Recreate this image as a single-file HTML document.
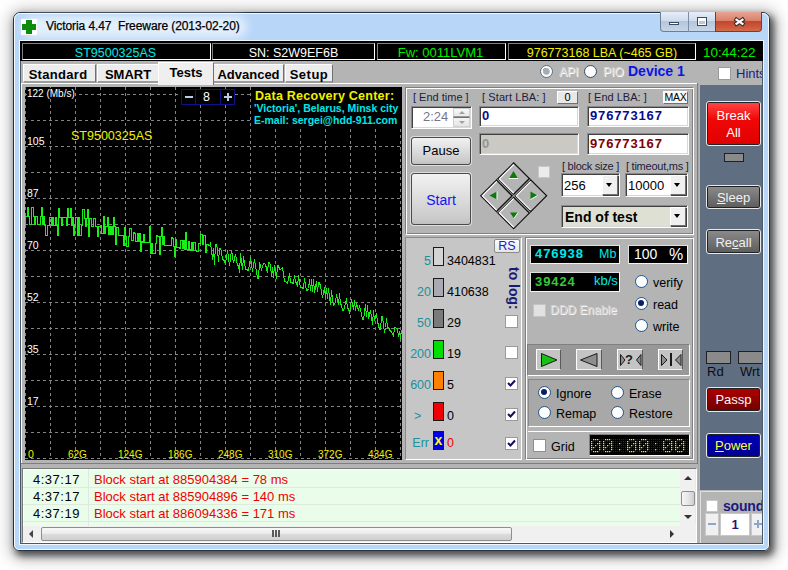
<!DOCTYPE html><html><head><meta charset="utf-8"><style>
*{margin:0;padding:0;box-sizing:border-box}
html,body{width:788px;height:570px;overflow:hidden;background:#fff;font-family:"Liberation Sans",sans-serif;color:#000}
.a{position:absolute;white-space:pre}
.et{position:absolute;border-top:1px solid #808080;border-left:1px solid #808080;border-right:1px solid #fff;border-bottom:1px solid #fff;box-shadow:inset 1px 1px 0 #fff, inset -1px -1px 0 #808080}
.sunk{position:absolute;border-top:1px solid #7b7b7b;border-left:1px solid #7b7b7b;border-right:1px solid #fff;border-bottom:1px solid #fff}
.sunk2{position:absolute;border-top:1px solid #8a8a8a;border-left:1px solid #8a8a8a;border-right:1px solid #fff;border-bottom:1px solid #fff;box-shadow:inset 1px 1px 0 #404040, inset -1px -1px 0 #d8d8d8}
.btn{position:absolute;border:1px solid #555;border-radius:3px;background:linear-gradient(#f2f2f2,#dedede 45%,#cacaca 90%,#c0c0c0);box-shadow:0 0 0 1px rgba(255,255,255,.55);text-align:center}
.seg{position:absolute;top:43px;height:17px;border-top:1px solid #808080;border-left:1px solid #808080;border-right:1px solid #fff;border-bottom:1px solid #fff;font-size:12.5px;text-align:center;line-height:15px;padding-top:2px;white-space:pre}
.tab{position:absolute;top:64px;height:19px;background:#ededed;border-top:1px solid #fcfcfc;border-left:1px solid #fff;border-right:1px solid #707070;border-bottom:2px solid #9c9c9c;padding-top:1px;font-size:13px;font-weight:bold;text-align:center;line-height:17px;white-space:pre}
.rad{position:absolute;width:13px;height:13px;border-radius:50%;border:1.5px solid #265888;background:radial-gradient(circle at 45% 40%,#fff,#fdfdfd 60%,#e8e8e8)}
.rad.on::after{content:"";position:absolute;left:2px;top:2px;width:6px;height:6px;border-radius:50%;background:#0c1c6a}
.chk{position:absolute;width:13px;height:13px;background:#fff;border:1px solid #8e8f8f}
.lbl{position:absolute;font-size:11px;color:#1c1c3c;white-space:pre}
</style></head><body>
<div class="a" style="left:13px;top:12px;width:757px;height:539px;border-radius:7px 7px 6px 6px;box-shadow:3px 4px 7px 1px rgba(0,0,0,.6), 2px 3px 16px 5px rgba(0,0,0,.28)"></div>
<div class="a" style="left:13px;top:12px;width:757px;height:539px;border:1px solid #26323e;border-radius:7px 7px 6px 6px;background:#b7d6f8"></div>
<div class="a" style="left:14px;top:13px;width:755px;height:537px;border:1px solid rgba(255,255,255,.85);border-radius:6px 6px 5px 5px"></div>
<div class="a" style="left:19px;top:40px;width:745px;height:505px;border:1px solid rgba(255,255,255,.8)"></div>
<div class="a" style="left:20px;top:41px;width:743px;height:503px;border:1px solid #4a5868;background:#b4b4b4"></div>
<div class="a" style="left:22px;top:16px;width:225px;height:22px;border-radius:11px;background:rgba(255,255,255,.62);filter:blur(5px)"></div>
<div class="a" style="left:21px;top:19px;width:16px;height:16px;background:#fff"></div>
<div class="a" style="left:26px;top:20px;width:6px;height:14px;background:#0b8d0b"></div>
<div class="a" style="left:22px;top:24px;width:14px;height:6px;background:#0b8d0b"></div>
<div class="a" style="left:46px;top:19px;font-size:12px;letter-spacing:-0.08px;color:#000;-webkit-text-stroke:0.25px #000">Victoria 4.47  Freeware (2013-02-20)</div>
<div class="a" style="left:660px;top:12px;width:56px;height:20px;border:1px solid #6d7f93;border-top:none;border-radius:0 0 0 4px;background:linear-gradient(#e6eef8,#cfdced 45%,#b3c6dc 50%,#c6d6e8)"></div>
<div class="a" style="left:688px;top:12px;width:1px;height:20px;background:#7d8ea2"></div>
<div class="a" style="left:715px;top:12px;width:47px;height:20px;border:1px solid #7a3a30;border-top:none;border-radius:0 0 4px 0;background:linear-gradient(#e8a493,#d9816b 45%,#c4442c 50%,#d26a4a)"></div>
<div class="a" style="left:669px;top:22px;width:10px;height:3px;background:#fff;border:1px solid #3a4a60"></div>
<div class="a" style="left:697px;top:17px;width:10px;height:9px;background:transparent;border:1px solid #3a4a60;box-shadow:inset 0 0 0 1px #fff, inset 0 2px 0 1px #fff"></div>
<svg class="a" style="left:732px;top:15px" width="15" height="13" viewBox="0 0 15 13"><path d="M4.5 4.7 L10.5 8.8 M10.5 4.7 L4.5 8.8" stroke="#3a2a2a" stroke-width="4.2" stroke-linecap="square"/><path d="M4.5 4.7 L10.5 8.8 M10.5 4.7 L4.5 8.8" stroke="#fff" stroke-width="2.2" stroke-linecap="square"/></svg>
<div class="a" style="left:20px;top:41px;width:743px;height:20px;background:#000"></div>
<div class="seg" style="left:22px;width:189px;color:#00e8e8;padding-right:2px">ST9500325AS</div>
<div class="seg" style="left:212px;width:163px;color:#fff">SN: S2W9EF6B</div>
<div class="seg" style="left:377px;width:129px;color:#00ee00;font-size:13px;padding-right:2px;padding-top:1px">Fw: 0011LVM1</div>
<div class="seg" style="left:508px;width:188px;color:#f0f000">976773168 LBA (~465 GB)</div>
<div class="a" style="left:703px;top:45px;font-size:13.5px;color:#00ee00">10:44:22</div>
<div class="tab" style="left:23px;width:73px;letter-spacing:0.3px;padding-right:3px">Standard</div>
<div class="tab" style="left:97px;width:62px">SMART</div>
<div class="tab" style="left:213px;width:71px">Advanced</div>
<div class="tab" style="left:285px;width:48px;letter-spacing:0.5px">Setup</div>
<div class="a" style="left:22px;top:83px;width:675px;height:1px;background:#fff"></div>
<div class="a" style="left:21px;top:83px;width:1px;height:380px;background:#fff"></div>
<div class="a" style="left:21px;top:463px;width:676px;height:1px;background:#7e7e7e"></div>
<div class="a" style="left:158px;top:62px;width:56px;height:23px;background:#efefef;border-top:1px solid #fff;border-left:1px solid #fff;border-right:1px solid #707070;font-size:13px;font-weight:bold;text-align:center;line-height:18px;padding-top:1px">Tests</div>
<div class="rad on" style="left:540px;top:65px;border-color:#5a7390"></div>
<div class="a" style="left:543px;top:68px;width:7px;height:7px;border-radius:50%;background:radial-gradient(#a8acb0 55%,#e0e0e0 75%)"></div>
<div class="a" style="left:559px;top:65px;font-size:12px;color:#d4d4d4;text-shadow:1px 1px 0 #fff">API</div>
<div class="rad" style="left:584px;top:65px;border-color:#34506e"></div>
<div class="a" style="left:603px;top:65px;font-size:12px;color:#d4d4d4;text-shadow:1px 1px 0 #fff">PIO</div>
<div class="a" style="left:628px;top:63px;font-size:14px;font-weight:bold;color:#0a14e6">Device 1</div>
<div class="chk" style="left:718px;top:67px;width:13px;height:13px;border-color:#9a9a9a"></div>
<div class="a" style="left:736px;top:66px;width:26px;overflow:hidden;font-size:13px;color:#1a1a8a">Hints</div>
<svg class="a" style="left:25px;top:87px" width="377" height="373" viewBox="25 87 377 373" shape-rendering="crispEdges">
<rect x="25" y="87" width="377" height="373" fill="#000"/>
<path d="M25 94.5H401 M25 120.5H401 M25 146.5H401 M25 172.5H401 M25 198.5H401 M25 224.5H401 M25 250.5H401 M25 276.5H401 M25 302.5H401 M25 328.5H401 M25 354.5H401 M25 380.5H401 M25 406.5H401 M25 432.5H401 M25 458.5H401 M25.5 87V459 M50.5 87V459 M75.5 87V459 M100.5 87V459 M125.5 87V459 M150.5 87V459 M175.5 87V459 M200.5 87V459 M225.5 87V459 M250.5 87V459 M275.5 87V459 M300.5 87V459 M325.5 87V459 M350.5 87V459 M375.5 87V459 M400.5 87V459" stroke="#848484" stroke-width="1" stroke-dasharray="3 3" fill="none"/>
<polyline points="25.5,224.5 25.5,224.5 25.5,216.5 26.5,216.5 26.5,216.5 26.5,216.5 27.5,216.5 27.5,216.5 27.5,207.5 28.5,207.5 28.5,207.5 28.5,216.5 29.5,216.5 29.5,216.5 29.5,224.5 31.5,224.5 31.5,224.5 31.5,207.5 33.5,207.5 33.5,207.5 33.5,216.5 34.5,216.5 34.5,216.5 34.5,224.5 35.5,224.5 35.5,224.5 35.5,216.5 37.5,216.5 37.5,216.5 37.5,224.5 38.5,224.5 38.5,224.5 38.5,224.5 39.5,224.5 39.5,224.5 39.5,224.5 40.5,224.5 40.5,224.5 40.5,216.5 41.5,216.5 41.5,216.5 41.5,207.5 42.5,207.5 42.5,207.5 42.5,224.5 43.5,224.5 43.5,224.5 43.5,216.5 44.5,216.5 44.5,216.5 44.5,225.5 45.5,225.5 45.5,225.5 45.5,235.5 47.5,235.5 47.5,235.5 47.5,225.5 48.5,225.5 48.5,225.5 48.5,225.5 49.5,225.5 49.5,225.5 49.5,217.5 50.5,217.5 50.5,217.5 50.5,217.5 51.5,217.5 51.5,217.5 51.5,225.5 52.5,225.5 52.5,225.5 52.5,217.5 53.5,217.5 53.5,217.5 53.5,225.5 55.5,225.5 55.5,225.5 55.5,217.5 56.5,217.5 56.5,217.5 56.5,225.5 57.5,225.5 57.5,225.5 57.5,235.5 58.5,235.5 58.5,235.5 58.5,208.5 59.5,208.5 59.5,208.5 59.5,217.5 61.5,217.5 61.5,217.5 61.5,225.5 62.5,225.5 62.5,225.5 62.5,217.5 63.5,217.5 63.5,217.5 63.5,217.5 64.5,217.5 64.5,217.5 64.5,217.5 66.5,217.5 66.5,217.5 66.5,225.5 67.5,225.5 67.5,225.5 67.5,208.5 68.5,208.5 68.5,208.5 68.5,217.5 69.5,217.5 69.5,217.5 69.5,217.5 70.5,217.5 70.5,217.5 70.5,208.5 71.5,208.5 71.5,208.5 71.5,225.5 72.5,225.5 72.5,225.5 72.5,217.5 73.5,217.5 73.5,217.5 73.5,235.5 74.5,235.5 74.5,235.5 74.5,225.5 75.5,225.5 75.5,225.5 75.5,217.5 76.5,217.5 76.5,217.5 76.5,217.5 77.5,217.5 77.5,217.5 77.5,235.5 78.5,235.5 78.5,235.5 78.5,217.5 79.5,217.5 79.5,217.5 79.5,235.5 81.5,235.5 81.5,235.5 81.5,225.5 82.5,225.5 82.5,225.5 82.5,209.5 84.5,209.5 84.5,209.5 84.5,218.5 85.5,218.5 85.5,218.5 85.5,226.5 86.5,226.5 86.5,226.5 86.5,218.5 87.5,218.5 87.5,218.5 87.5,209.5 88.5,209.5 88.5,209.5 88.5,236.5 89.5,236.5 89.5,236.5 89.5,218.5 91.5,218.5 91.5,218.5 91.5,226.5 93.5,226.5 93.5,226.5 93.5,218.5 95.5,218.5 95.5,218.5 95.5,226.5 97.5,226.5 97.5,226.5 97.5,236.5 98.5,236.5 98.5,236.5 98.5,226.5 100.5,226.5 100.5,226.5 100.5,225.5 101.5,225.5 101.5,225.5 101.5,233.5 103.5,233.5 103.5,233.5 103.5,216.5 104.5,216.5 104.5,216.5 104.5,233.5 105.5,233.5 105.5,233.5 105.5,226.5 107.5,226.5 107.5,226.5 107.5,217.5 108.5,217.5 108.5,217.5 108.5,234.5 109.5,234.5 109.5,234.5 109.5,226.5 110.5,226.5 110.5,226.5 110.5,234.5 111.5,234.5 111.5,234.5 111.5,226.5 112.5,226.5 112.5,226.5 112.5,234.5 113.5,234.5 113.5,234.5 113.5,217.5 114.5,217.5 114.5,217.5 114.5,226.5 115.5,226.5 115.5,226.5 115.5,244.5 116.5,244.5 116.5,244.5 116.5,227.5 117.5,227.5 117.5,227.5 117.5,227.5 118.5,227.5 118.5,227.5 118.5,235.5 119.5,235.5 119.5,235.5 119.5,235.5 121.5,235.5 121.5,235.5 121.5,235.5 123.5,235.5 123.5,235.5 123.5,245.5 124.5,245.5 124.5,245.5 124.5,227.5 125.5,227.5 125.5,227.5 125.5,236.5 126.5,236.5 126.5,236.5 126.5,246.5 128.5,246.5 128.5,246.5 128.5,236.5 129.5,236.5 129.5,236.5 129.5,228.5 131.5,228.5 131.5,228.5 131.5,240.5 133.5,240.5 133.5,240.5 133.5,232.5 134.5,232.5 134.5,232.5 134.5,233.5 135.5,233.5 135.5,233.5 135.5,241.5 137.5,241.5 137.5,241.5 137.5,233.5 138.5,233.5 138.5,233.5 138.5,241.5 139.5,241.5 139.5,241.5 139.5,233.5 140.5,233.5 140.5,233.5 140.5,251.5 141.5,251.5 141.5,251.5 141.5,241.5 142.5,241.5 142.5,241.5 142.5,242.5 143.5,242.5 143.5,242.5 143.5,234.5 144.5,234.5 144.5,234.5 144.5,242.5 145.5,242.5 145.5,242.5 145.5,242.5 146.5,242.5 146.5,242.5 146.5,242.5 147.5,242.5 147.5,242.5 147.5,242.5 149.5,242.5 149.5,242.5 149.5,226.5 150.5,226.5 150.5,226.5 150.5,253.5 151.5,253.5 151.5,253.5 151.5,243.5 152.5,243.5 152.5,243.5 152.5,253.5 153.5,253.5 153.5,253.5 153.5,253.5 155.5,253.5 155.5,253.5 155.5,243.5 156.5,243.5 156.5,243.5 156.5,235.5 157.5,235.5 157.5,235.5 157.5,236.5 159.5,236.5 159.5,236.5 159.5,254.5 160.5,254.5 160.5,254.5 160.5,236.5 161.5,236.5 161.5,236.5 161.5,227.5 162.5,227.5 162.5,227.5 162.5,244.5 163.5,244.5 163.5,244.5 163.5,236.5 164.5,236.5 164.5,236.5 164.5,245.5 166.5,245.5 166.5,245.5 166.5,245.5 168.5,245.5 168.5,245.5 168.5,245.5 170.5,245.5 170.5,245.5 170.5,245.5 171.5,245.5 171.5,245.5 171.5,237.5 172.5,237.5 172.5,237.5 172.5,238.5 173.5,238.5 173.5,238.5 173.5,246.5 174.5,246.5 174.5,246.5 174.5,256.5 175.5,256.5 175.5,256.5 175.5,239.5 176.5,239.5 176.5,239.5 176.5,247.5 177.5,247.5 177.5,247.5 177.5,247.5 179.5,247.5 179.5,247.5 179.5,248.5 180.5,248.5 180.5,248.5 180.5,240.5 182.5,240.5 182.5,240.5 182.5,248.5 183.5,248.5 183.5,248.5 183.5,240.5 184.5,240.5 184.5,240.5 184.5,249.5 185.5,249.5 185.5,249.5 185.5,232.5 186.5,232.5 186.5,232.5 186.5,249.5 188.5,249.5 188.5,249.5 188.5,241.5 189.5,241.5 189.5,241.5 189.5,249.5 190.5,249.5 190.5,249.5 190.5,250.5 191.5,250.5 191.5,250.5 191.5,242.5 192.5,242.5 192.5,242.5 192.5,250.5 193.5,250.5 193.5,250.5 193.5,242.5 195.5,242.5 195.5,242.5 195.5,250.5 196.5,250.5 196.5,250.5 196.5,251.5 198.5,251.5 198.5,251.5 198.5,243.5 200.5,243.5 200.5,243.5 200.5,234.5 202.5,234.5 202.5,234.5 202.5,244.5 203.5,244.5 203.5,244.5 203.5,235.5 205.5,235.5 205.5,235.5 205.5,252.5 206.5,252.5 206.5,252.5 206.5,244.5 208.5,244.5 208.5,244.5 208.5,245.5 210.5,245.5 210.5,245.5 210.5,242.5 212.5,259.5 213.5,248.5 214.5,264.5 215.5,244.5 216.5,244.5 217.5,249.5 218.5,261.5 219.5,248.5 220.5,248.5 221.5,251.5 222.5,259.5 223.5,259.5 225.5,263.5 227.5,250.5 229.5,265.5 231.5,250.5 233.5,262.5 235.5,254.5 237.5,265.5 238.5,265.5 239.5,272.5 240.5,253.5 242.5,269.5 243.5,256.5 245.5,269.5 246.5,269.5 248.5,270.5 250.5,257.5 252.5,271.5 254.5,259.5 256.5,271.5 257.5,278.5 258.5,278.5 259.5,262.5 261.5,269.5 263.5,263.5 264.5,263.5 265.5,264.5 267.5,272.5 268.5,262.5 269.5,262.5 270.5,265.5 271.5,276.5 272.5,267.5 273.5,277.5 274.5,265.5 276.5,278.5 277.5,265.5 278.5,265.5 279.5,269.5 280.5,269.5 282.5,267.5 284.5,281.5 285.5,281.5 287.5,283.5 289.5,273.5 290.5,282.5 291.5,282.5 293.5,283.5 294.5,275.5 295.5,282.5 296.5,282.5 297.5,286.5 298.5,275.5 300.5,287.5 301.5,287.5 303.5,288.5 304.5,278.5 306.5,290.5 307.5,290.5 308.5,288.5 309.5,279.5 310.5,290.5 311.5,279.5 312.5,291.5 313.5,279.5 314.5,292.5 316.5,281.5 317.5,291.5 318.5,282.5 319.5,282.5 320.5,286.5 322.5,297.5 324.5,287.5 325.5,297.5 326.5,288.5 327.5,298.5 328.5,288.5 330.5,304.5 331.5,290.5 332.5,298.5 333.5,305.5 335.5,302.5 336.5,294.5 338.5,304.5 339.5,293.5 340.5,304.5 341.5,304.5 342.5,310.5 343.5,310.5 344.5,307.5 346.5,298.5 347.5,308.5 348.5,308.5 349.5,313.5 351.5,299.5 353.5,309.5 354.5,300.5 355.5,310.5 356.5,303.5 358.5,310.5 359.5,305.5 361.5,314.5 362.5,319.5 363.5,319.5 365.5,304.5 366.5,316.5 367.5,305.5 368.5,318.5 370.5,310.5 372.5,324.5 373.5,310.5 374.5,320.5 376.5,313.5 377.5,321.5 379.5,329.5 380.5,329.5 381.5,316.5 382.5,316.5 384.5,332.5 385.5,327.5 386.5,318.5 387.5,327.5 388.5,327.5 390.5,331.5 391.5,331.5 393.5,336.5 394.5,327.5 395.5,327.5 397.5,329.5 398.5,336.5 399.5,331.5 400.5,338.5 401.5,330.5" fill="none" stroke="#16f016" stroke-width="1" shape-rendering="crispEdges"/>
</svg>
<div class="a" style="left:27px;top:88px;font-size:10px;color:#fff;background:#000;line-height:11px">122 (Mb/s)</div>
<div class="a" style="left:27px;top:136px;font-size:10.5px;color:#fff;line-height:11px">105</div>
<div class="a" style="left:27px;top:188px;font-size:10.5px;color:#fff;line-height:11px">87</div>
<div class="a" style="left:27px;top:240px;font-size:10.5px;color:#fff;line-height:11px">70</div>
<div class="a" style="left:27px;top:292px;font-size:10.5px;color:#fff;line-height:11px">52</div>
<div class="a" style="left:27px;top:344px;font-size:10.5px;color:#fff;line-height:11px">35</div>
<div class="a" style="left:27px;top:396px;font-size:10.5px;color:#fff;line-height:11px">17</div>
<div class="a" style="left:28px;top:449px;font-size:10.5px;color:#f0f000;line-height:11px">0</div>
<div class="a" style="left:68px;top:449px;font-size:10px;color:#f0f000;line-height:11px">62G</div>
<div class="a" style="left:118px;top:449px;font-size:10px;color:#f0f000;line-height:11px">124G</div>
<div class="a" style="left:168px;top:449px;font-size:10px;color:#f0f000;line-height:11px">186G</div>
<div class="a" style="left:218px;top:449px;font-size:10px;color:#f0f000;line-height:11px">248G</div>
<div class="a" style="left:268px;top:449px;font-size:10px;color:#f0f000;line-height:11px">310G</div>
<div class="a" style="left:318px;top:449px;font-size:10px;color:#f0f000;line-height:11px">372G</div>
<div class="a" style="left:368px;top:449px;font-size:10px;color:#f0f000;line-height:11px">434G</div>
<div class="a" style="left:71px;top:129px;font-size:12.5px;color:#f0f000">ST9500325AS</div>
<div class="a" style="left:181px;top:89px;width:54px;height:16px;background:#000;border:1px solid #10108a"></div>
<div class="a" style="left:195px;top:89px;width:1px;height:16px;background:#10108a"></div>
<div class="a" style="left:220px;top:89px;width:1px;height:16px;background:#10108a"></div>
<div class="a" style="left:185px;top:96px;width:8px;height:2px;background:#b8cce4"></div>
<div class="a" style="left:203px;top:89px;font-size:12.5px;color:#fff;line-height:16px">8</div>
<div class="a" style="left:224px;top:96px;width:8px;height:2px;background:#b8cce4"></div>
<div class="a" style="left:227px;top:93px;width:2px;height:8px;background:#b8cce4"></div>
<div class="a" style="left:252px;top:87px;width:149px;height:40px;background:#000"></div>
<div class="a" style="left:255px;top:89px;font-size:12.5px;font-weight:bold;color:#f0f000;line-height:14px;letter-spacing:0.25px">Data Recovery Center:</div>
<div class="a" style="left:254px;top:102px;font-size:10.5px;font-weight:bold;color:#00e8e8;line-height:13px">'Victoria', Belarus, Minsk city</div>
<div class="a" style="left:254px;top:114px;font-size:10.5px;font-weight:bold;color:#00e8e8;line-height:13px">E-mail: sergei@hdd-911.com</div>
<div class="et" style="left:405px;top:87px;width:289px;height:148px"></div>
<div class="lbl" style="left:413px;top:91px">[ End time ]</div>
<div class="lbl" style="left:482px;top:91px;letter-spacing:0.1px">[ Start LBA: ]</div>
<div class="lbl" style="left:588px;top:91px">[ End LBA: ]</div>
<div class="a" style="left:557px;top:91px;width:21px;height:13px;background:#e8e8e8;border:1px solid #fff;border-right-color:#707070;border-bottom-color:#707070;font-size:11px;text-align:center;line-height:11px">0</div>
<div class="a" style="left:663px;top:91px;width:25px;height:13px;background:#e8e8e8;border:1px solid #fff;border-right-color:#707070;border-bottom-color:#707070;font-size:10.5px;letter-spacing:-0.3px;text-align:center;line-height:11px;background:#f8f8f8">MAX</div>
<div class="sunk2" style="left:411px;top:106px;width:61px;height:23px;background:#fff"></div>
<div class="a" style="left:423px;top:109px;font-size:13px;color:#76768a">2:24</div>
<div class="a" style="left:453px;top:108px;width:17px;height:9px;background:linear-gradient(#f8f8f8,#e8e8e8);border:1px solid #d0d0d0;border-bottom-color:#9a9a9a"></div>
<div class="a" style="left:453px;top:117px;width:17px;height:10px;background:linear-gradient(#f4f4f4,#e4e4e4);border:1px solid #d0d0d0;border-top-color:#707070"></div>
<div class="a" style="left:459px;top:111px;width:0;height:0;border-left:3px solid transparent;border-right:3px solid transparent;border-bottom:3px solid #a0a0a0"></div>
<div class="a" style="left:459px;top:121px;width:0;height:0;border-left:3px solid transparent;border-right:3px solid transparent;border-top:3px solid #a0a0a0"></div>
<div class="sunk2" style="left:479px;top:106px;width:100px;height:21px;background:#fff"></div>
<div class="a" style="left:482px;top:108px;font-size:13px;font-weight:bold;color:#0a0a8a">0</div>
<div class="sunk2" style="left:587px;top:106px;width:102px;height:21px;background:#fff"></div>
<div class="a" style="left:590px;top:108px;font-size:13px;font-weight:bold;color:#0a0a8a;letter-spacing:0.85px">976773167</div>
<div class="sunk2" style="left:479px;top:133px;width:100px;height:22px;background:#cac9c3"></div>
<div class="a" style="left:482px;top:136px;font-size:13px;font-weight:bold;color:#949494">0</div>
<div class="sunk2" style="left:587px;top:133px;width:102px;height:22px;background:#fff"></div>
<div class="a" style="left:590px;top:136px;font-size:13px;font-weight:bold;color:#800000;letter-spacing:0.85px">976773167</div>
<div class="btn" style="left:411px;top:137px;width:60px;height:28px;border-color:#4a4a4a;font-size:13px;line-height:26px">Pause</div>
<div class="btn" style="left:411px;top:173px;width:60px;height:52px;border-color:#4a4a4a;font-size:14px;line-height:52px;color:#1414f0">Start</div>
<svg class="a" style="left:476px;top:158px" width="76" height="76" viewBox="476 158 76 76">
<g transform="rotate(45 513.7 195.8)">
<rect x="490.4" y="172.5" width="46.6" height="46.6" fill="#b4b4b4" stroke="#111" stroke-width="1.2"/>
<path d="M513.7 172.5V219.1 M490.4 195.8H537" stroke="#111" stroke-width="3.6"/>
<path d="M513.7 172.5V219.1 M490.4 195.8H537" stroke="#9a9a9a" stroke-width="1"/>
<path d="M491.6 173.6V194 H511.9 M515.5 173.6V194 H535.8 M491.6 197.6V218 H511.9 M515.5 197.6V218 H535.8" stroke="#fff" stroke-width="1.2" fill="none"/>
</g>
<path d="M513.5 171 L518 178.5 H509Z" fill="#0a7a0a"/><path d="M518 178.5 H509" stroke="#fff" stroke-width="1"/>
<path d="M514 218.5 L518 212.5 H510Z" fill="#0a7a0a"/><path d="M514 218.5 L518 212.5" stroke="#fff" stroke-width="1"/>
<path d="M489.5 195.5 L497 191.5 V199.5Z" fill="#0a7a0a"/><path d="M497 191.5 V199.5" stroke="#fff" stroke-width="1"/>
<path d="M537.5 195.5 L530.5 191.5 V199.5Z" fill="#0a7a0a"/><path d="M537.5 195.5 L530.5 199.5" stroke="#fff" stroke-width="1"/>
</svg>
<div class="a" style="left:538px;top:166px;width:12px;height:12px;background:#ececec;border:1px solid #c8c8c8"></div>
<div class="lbl" style="left:562px;top:160px;letter-spacing:-0.25px">[ block size ]</div>
<div class="lbl" style="left:626px;top:160px;letter-spacing:-0.25px">[ timeout,ms ]</div>
<div class="sunk2" style="left:561px;top:173px;width:59px;height:24px;background:#fff"></div>
<div class="a" style="left:564px;top:176px;font-size:13px;font-weight:normal;color:#000;line-height:20px">256</div>
<div class="a" style="left:602px;top:175px;width:16px;height:20px;background:#f0f0f0;border:1px solid #fff;border-right-color:#707070;border-bottom-color:#707070;box-shadow:1px 1px 0 #404040"></div>
<div class="a" style="left:606px;top:183px;width:0;height:0;border-left:3.5px solid transparent;border-right:3.5px solid transparent;border-top:4px solid #000"></div>
<div class="sunk2" style="left:625px;top:173px;width:63px;height:24px;background:#fff"></div>
<div class="a" style="left:628px;top:176px;font-size:13px;font-weight:normal;color:#000;line-height:20px">10000</div>
<div class="a" style="left:670px;top:175px;width:16px;height:20px;background:#f0f0f0;border:1px solid #fff;border-right-color:#707070;border-bottom-color:#707070;box-shadow:1px 1px 0 #404040"></div>
<div class="a" style="left:674px;top:183px;width:0;height:0;border-left:3.5px solid transparent;border-right:3.5px solid transparent;border-top:4px solid #000"></div>
<div class="sunk2" style="left:561px;top:205px;width:127px;height:23px;background:#dfe0d4"></div>
<div class="a" style="left:565px;top:208px;font-size:14px;font-weight:bold;color:#000;line-height:19px">End of test</div>
<div class="a" style="left:670px;top:207px;width:16px;height:19px;background:#f0f0f0;border:1px solid #fff;border-right-color:#707070;border-bottom-color:#707070;box-shadow:1px 1px 0 #404040"></div>
<div class="a" style="left:674px;top:214px;width:0;height:0;border-left:3.5px solid transparent;border-right:3.5px solid transparent;border-top:4px solid #000"></div>
<div class="a" style="left:405px;top:237px;width:117px;height:223px;background:#c6c6c6;border-top:1px solid #8a8a8a;border-left:1px solid #8a8a8a;border-right:1px solid #fff;border-bottom:1px solid #fff"></div>
<div class="a" style="left:494px;top:239px;width:26px;height:14px;background:linear-gradient(#fdfdfd,#e6e6e6);border:1px solid #8a8a8a;border-radius:2px;font-size:12.5px;color:#1b1bd0;text-align:center;line-height:12px">RS</div>
<div class="a" style="left:402px;width:29px;text-align:right;top:254px;font-size:12.5px;color:#20909a;line-height:14px">5</div>
<div class="a" style="left:433px;top:247px;width:11px;height:19px;background:#d4d4d4;border:1px solid #1a1a1a"></div>
<div class="a" style="left:447px;top:254px;font-size:12.5px;color:#000;line-height:14px">3404831</div>
<div class="a" style="left:402px;width:29px;text-align:right;top:285px;font-size:12.5px;color:#20909a;line-height:14px">20</div>
<div class="a" style="left:433px;top:278px;width:11px;height:19px;background:#a9a9b1;border:1px solid #1a1a1a"></div>
<div class="a" style="left:447px;top:285px;font-size:12.5px;color:#000;line-height:14px">410638</div>
<div class="a" style="left:402px;width:29px;text-align:right;top:316px;font-size:12.5px;color:#20909a;line-height:14px">50</div>
<div class="a" style="left:433px;top:309px;width:11px;height:19px;background:#7a7a7a;border:1px solid #1a1a1a"></div>
<div class="a" style="left:447px;top:316px;font-size:12.5px;color:#000;line-height:14px">29</div>
<div class="chk" style="left:505px;top:315px;width:13px;height:13px;border-color:#9a9a9a"></div>
<div class="a" style="left:402px;width:29px;text-align:right;top:347px;font-size:12.5px;color:#20909a;line-height:14px">200</div>
<div class="a" style="left:433px;top:340px;width:11px;height:19px;background:#00e000;border:1px solid #1a1a1a"></div>
<div class="a" style="left:447px;top:347px;font-size:12.5px;color:#000;line-height:14px">19</div>
<div class="chk" style="left:505px;top:346px;width:13px;height:13px;border-color:#9a9a9a"></div>
<div class="a" style="left:402px;width:29px;text-align:right;top:378px;font-size:12.5px;color:#20909a;line-height:14px">600</div>
<div class="a" style="left:433px;top:371px;width:11px;height:19px;background:#ff8000;border:1px solid #1a1a1a"></div>
<div class="a" style="left:447px;top:378px;font-size:12.5px;color:#000;line-height:14px">5</div>
<div class="chk" style="left:505px;top:377px;width:13px;height:13px;border-color:#9a9a9a"></div>
<svg class="a" style="left:507px;top:379px" width="9" height="9" viewBox="0 0 9 9"><path d="M1 4 L3.5 6.5 L8 1.5" stroke="#101060" stroke-width="2" fill="none"/></svg>
<div class="a" style="left:414px;top:409px;font-size:12.5px;color:#20909a;line-height:14px">&gt;</div>
<div class="a" style="left:433px;top:402px;width:11px;height:19px;background:#f00000;border:1px solid #1a1a1a"></div>
<div class="a" style="left:447px;top:409px;font-size:12.5px;color:#000;line-height:14px">0</div>
<div class="chk" style="left:505px;top:408px;width:13px;height:13px;border-color:#9a9a9a"></div>
<svg class="a" style="left:507px;top:410px" width="9" height="9" viewBox="0 0 9 9"><path d="M1 4 L3.5 6.5 L8 1.5" stroke="#101060" stroke-width="2" fill="none"/></svg>
<div class="a" style="left:400px;width:29px;text-align:right;top:436px;font-size:12.5px;color:#20909a;line-height:14px">Err</div>
<div class="a" style="left:433px;top:431px;width:11px;height:19px;background:#0000e0"></div>
<div class="a" style="left:433px;top:434px;width:11px;text-align:center;font-size:14px;font-weight:bold;color:#ffff00;line-height:13px">x</div>
<div class="a" style="left:447px;top:436px;font-size:12.5px;color:#f00000;line-height:14px">0</div>
<div class="chk" style="left:505px;top:437px;width:13px;height:13px;border-color:#9a9a9a"></div>
<svg class="a" style="left:507px;top:439px" width="9" height="9" viewBox="0 0 9 9"><path d="M1 4 L3.5 6.5 L8 1.5" stroke="#101060" stroke-width="2" fill="none"/></svg>
<div class="a" style="left:521px;top:267px;width:60px;transform-origin:0 0;transform:rotate(90deg);font-size:14px;font-weight:bold;color:#1a1a70;line-height:14px">to log:</div>
<div class="et" style="left:525px;top:237px;width:169px;height:223px"></div>
<div class="a" style="left:530px;top:245px;width:90px;height:19px;background:#000;border:1px solid #f4f4f4;border-top-color:#e0e0e0;border-left-color:#e0e0e0"></div>
<div class="a" style="left:535px;top:247px;font-size:13px;font-weight:bold;color:#00e8e8;line-height:14px;letter-spacing:0.9px">476938</div>
<div class="a" style="left:599px;top:247px;font-size:12.5px;color:#00e8e8;line-height:14px">Mb</div>
<div class="a" style="left:628px;top:245px;width:60px;height:19px;background:#000;border:1px solid #f4f4f4;border-top-color:#e0e0e0;border-left-color:#e0e0e0"></div>
<div class="a" style="left:634px;top:246px;font-size:14px;color:#fff;line-height:16px">100</div>
<div class="a" style="left:669px;top:246px;font-size:16px;color:#fff;line-height:17px">%</div>
<div class="a" style="left:530px;top:272px;width:90px;height:20px;background:#000;border:1px solid #f4f4f4;border-top-color:#e0e0e0;border-left-color:#e0e0e0"></div>
<div class="a" style="left:535px;top:275px;font-size:13px;font-weight:bold;color:#38c838;line-height:14px;letter-spacing:0.9px">39424</div>
<div class="a" style="left:594px;top:274px;font-size:13px;color:#00e8e8;line-height:14px">kb/s</div>
<div class="a" style="left:533px;top:304px;width:13px;height:13px;background:#e2e2e2;border:1px solid #c4c4c4"></div>
<div class="a" style="left:550px;top:303px;font-size:12px;color:#d0d0d0;text-shadow:1px 1px 0 #f4f4f4">DDD Enable</div>
<div class="rad" style="left:635px;top:275px"></div>
<div class="a" style="left:653px;top:276px;font-size:12.5px;color:#000;line-height:14px">verify</div>
<div class="rad on" style="left:635px;top:297px"></div>
<div class="a" style="left:653px;top:298px;font-size:12.5px;color:#000;line-height:14px">read</div>
<div class="rad" style="left:635px;top:319px"></div>
<div class="a" style="left:653px;top:320px;font-size:12.5px;color:#000;line-height:14px">write</div>
<div class="a" style="left:527px;top:344px;width:163px;height:32px;background:#989898;border:1px solid #fff;border-top-color:#808080;border-left-color:#808080"></div>
<div class="a" style="left:536px;top:349px;width:25px;height:21px;background:#c4c4c4;border:1px solid #fff;border-right-color:#5a5a5a;border-bottom-color:#f0f0f0"></div>
<div class="a" style="left:576px;top:349px;width:26px;height:21px;background:#c4c4c4;border:1px solid #fff;border-right-color:#5a5a5a;border-bottom-color:#f0f0f0"></div>
<div class="a" style="left:617px;top:349px;width:26px;height:21px;background:#c4c4c4;border:1px solid #fff;border-right-color:#5a5a5a;border-bottom-color:#f0f0f0"></div>
<div class="a" style="left:658px;top:349px;width:25px;height:21px;background:#c4c4c4;border:1px solid #fff;border-right-color:#5a5a5a;border-bottom-color:#f0f0f0"></div>
<svg class="a" style="left:536px;top:349px" width="154" height="22" viewBox="536 349 154 22"><path d="M541.5 353.5 L557 360 L541.5 366.5Z" fill="#18c018" stroke="#1a1a1a" stroke-width="1"/><path d="M597 353.5 L580.5 360 L597 366.5Z" fill="#8e8e8e" stroke="#1a1a1a" stroke-width="1"/><path d="M620.5 354.5 L625 360 L620.5 365.5Z M641 354.5 L636.5 360 L641 365.5Z" fill="#8e8e8e" stroke="#1a1a1a" stroke-width="1"/><path d="M661.5 354.5 L667 360 L661.5 365.5Z M681 354.5 L675.5 360 L681 365.5Z" fill="#8e8e8e" stroke="#1a1a1a" stroke-width="1"/><rect x="670" y="353" width="2" height="13" fill="#1a1a1a"/></svg>
<div class="a" style="left:625px;top:352px;font-size:13px;font-weight:bold;color:#1a1a1a;line-height:16px">?</div>
<div class="a" style="left:528px;top:379px;width:162px;height:48px;background:#a8a8a8;border:1px solid #fff;border-top-color:#888;border-left-color:#888"></div>
<div class="rad on" style="left:538px;top:386px"></div>
<div class="a" style="left:556px;top:387px;font-size:12.5px;color:#000;line-height:14px">Ignore</div>
<div class="rad" style="left:611px;top:386px"></div>
<div class="a" style="left:629px;top:387px;font-size:12.5px;color:#000;line-height:14px">Erase</div>
<div class="rad" style="left:538px;top:406px"></div>
<div class="a" style="left:556px;top:407px;font-size:12.5px;color:#000;line-height:14px">Remap</div>
<div class="rad" style="left:611px;top:406px"></div>
<div class="a" style="left:629px;top:407px;font-size:12.5px;color:#000;line-height:14px">Restore</div>
<div class="a" style="left:528px;top:431px;width:162px;height:1px;background:#fff"></div>
<div class="chk" style="left:533px;top:439px"></div>
<div class="a" style="left:551px;top:440px;font-size:12.5px;color:#000;line-height:14px">Grid</div>
<div class="a" style="left:589px;top:434px;width:101px;height:22px;background:#000;border:1px solid #fff;border-top-color:#808080;border-left-color:#808080"></div>
<svg class="a" style="left:588px;top:436px" width="102" height="18" viewBox="588 436 102 18"><path d="M591 439h1v1h-1zM591 451h1v1h-1zM593 441h1v1h-1zM593 443h1v1h-1zM593 445h1v1h-1zM593 449h1v1h-1zM595 441h1v1h-1zM595 443h1v1h-1zM595 447h1v1h-1zM595 449h1v1h-1zM597 441h1v1h-1zM597 445h1v1h-1zM597 447h1v1h-1zM597 449h1v1h-1zM599 439h1v1h-1zM599 451h1v1h-1zM601 439h1v1h-1zM601 441h1v1h-1zM601 443h1v1h-1zM601 445h1v1h-1zM601 447h1v1h-1zM601 449h1v1h-1zM601 451h1v1h-1zM603 439h1v1h-1zM603 451h1v1h-1zM605 441h1v1h-1zM605 443h1v1h-1zM605 445h1v1h-1zM605 449h1v1h-1zM607 441h1v1h-1zM607 443h1v1h-1zM607 447h1v1h-1zM607 449h1v1h-1zM609 441h1v1h-1zM609 445h1v1h-1zM609 447h1v1h-1zM609 449h1v1h-1zM611 439h1v1h-1zM611 451h1v1h-1zM613 439h1v1h-1zM613 441h1v1h-1zM613 443h1v1h-1zM613 445h1v1h-1zM613 447h1v1h-1zM613 449h1v1h-1zM613 451h1v1h-1zM615 439h1v1h-1zM615 441h1v1h-1zM615 443h1v1h-1zM615 445h1v1h-1zM615 447h1v1h-1zM615 449h1v1h-1zM615 451h1v1h-1zM617 439h1v1h-1zM617 441h1v1h-1zM617 443h1v1h-1zM617 445h1v1h-1zM617 447h1v1h-1zM617 449h1v1h-1zM617 451h1v1h-1zM619 439h1v1h-1zM619 441h1v1h-1zM619 445h1v1h-1zM619 447h1v1h-1zM619 451h1v1h-1zM621 439h1v1h-1zM621 441h1v1h-1zM621 443h1v1h-1zM621 445h1v1h-1zM621 447h1v1h-1zM621 449h1v1h-1zM621 451h1v1h-1zM623 439h1v1h-1zM623 441h1v1h-1zM623 443h1v1h-1zM623 445h1v1h-1zM623 447h1v1h-1zM623 449h1v1h-1zM623 451h1v1h-1zM625 439h1v1h-1zM625 441h1v1h-1zM625 443h1v1h-1zM625 445h1v1h-1zM625 447h1v1h-1zM625 449h1v1h-1zM625 451h1v1h-1zM627 439h1v1h-1zM627 451h1v1h-1zM629 441h1v1h-1zM629 443h1v1h-1zM629 445h1v1h-1zM629 449h1v1h-1zM631 441h1v1h-1zM631 443h1v1h-1zM631 447h1v1h-1zM631 449h1v1h-1zM633 441h1v1h-1zM633 445h1v1h-1zM633 447h1v1h-1zM633 449h1v1h-1zM635 439h1v1h-1zM635 451h1v1h-1zM637 439h1v1h-1zM637 441h1v1h-1zM637 443h1v1h-1zM637 445h1v1h-1zM637 447h1v1h-1zM637 449h1v1h-1zM637 451h1v1h-1zM639 439h1v1h-1zM639 451h1v1h-1zM641 441h1v1h-1zM641 443h1v1h-1zM641 445h1v1h-1zM641 449h1v1h-1zM643 441h1v1h-1zM643 443h1v1h-1zM643 447h1v1h-1zM643 449h1v1h-1zM645 441h1v1h-1zM645 445h1v1h-1zM645 447h1v1h-1zM645 449h1v1h-1zM647 439h1v1h-1zM647 451h1v1h-1zM649 439h1v1h-1zM649 441h1v1h-1zM649 443h1v1h-1zM649 445h1v1h-1zM649 447h1v1h-1zM649 449h1v1h-1zM649 451h1v1h-1zM651 439h1v1h-1zM651 441h1v1h-1zM651 443h1v1h-1zM651 445h1v1h-1zM651 447h1v1h-1zM651 449h1v1h-1zM651 451h1v1h-1zM653 439h1v1h-1zM653 441h1v1h-1zM653 443h1v1h-1zM653 445h1v1h-1zM653 447h1v1h-1zM653 449h1v1h-1zM653 451h1v1h-1zM655 439h1v1h-1zM655 441h1v1h-1zM655 445h1v1h-1zM655 447h1v1h-1zM655 451h1v1h-1zM657 439h1v1h-1zM657 441h1v1h-1zM657 443h1v1h-1zM657 445h1v1h-1zM657 447h1v1h-1zM657 449h1v1h-1zM657 451h1v1h-1zM659 439h1v1h-1zM659 441h1v1h-1zM659 443h1v1h-1zM659 445h1v1h-1zM659 447h1v1h-1zM659 449h1v1h-1zM659 451h1v1h-1zM661 439h1v1h-1zM661 441h1v1h-1zM661 443h1v1h-1zM661 445h1v1h-1zM661 447h1v1h-1zM661 449h1v1h-1zM661 451h1v1h-1zM663 439h1v1h-1zM663 451h1v1h-1zM665 441h1v1h-1zM665 443h1v1h-1zM665 445h1v1h-1zM665 449h1v1h-1zM667 441h1v1h-1zM667 443h1v1h-1zM667 447h1v1h-1zM667 449h1v1h-1zM669 441h1v1h-1zM669 445h1v1h-1zM669 447h1v1h-1zM669 449h1v1h-1zM671 439h1v1h-1zM671 451h1v1h-1zM673 439h1v1h-1zM673 441h1v1h-1zM673 443h1v1h-1zM673 445h1v1h-1zM673 447h1v1h-1zM673 449h1v1h-1zM673 451h1v1h-1zM675 439h1v1h-1zM675 451h1v1h-1zM677 441h1v1h-1zM677 443h1v1h-1zM677 445h1v1h-1zM677 449h1v1h-1zM679 441h1v1h-1zM679 443h1v1h-1zM679 447h1v1h-1zM679 449h1v1h-1zM681 441h1v1h-1zM681 445h1v1h-1zM681 447h1v1h-1zM681 449h1v1h-1zM683 439h1v1h-1zM683 451h1v1h-1zM685 439h1v1h-1zM685 441h1v1h-1zM685 443h1v1h-1zM685 445h1v1h-1zM685 447h1v1h-1zM685 449h1v1h-1zM685 451h1v1h-1zM687 439h1v1h-1zM687 441h1v1h-1zM687 443h1v1h-1zM687 445h1v1h-1zM687 447h1v1h-1zM687 449h1v1h-1zM687 451h1v1h-1z" fill="#0c3a0c"/><path d="M591 441h1.3v1.3h-1.3zM591 443h1.3v1.3h-1.3zM591 445h1.3v1.3h-1.3zM591 447h1.3v1.3h-1.3zM591 449h1.3v1.3h-1.3zM593 439h1.3v1.3h-1.3zM593 447h1.3v1.3h-1.3zM593 451h1.3v1.3h-1.3zM595 439h1.3v1.3h-1.3zM595 445h1.3v1.3h-1.3zM595 451h1.3v1.3h-1.3zM597 439h1.3v1.3h-1.3zM597 443h1.3v1.3h-1.3zM597 451h1.3v1.3h-1.3zM599 441h1.3v1.3h-1.3zM599 443h1.3v1.3h-1.3zM599 445h1.3v1.3h-1.3zM599 447h1.3v1.3h-1.3zM599 449h1.3v1.3h-1.3zM603 441h1.3v1.3h-1.3zM603 443h1.3v1.3h-1.3zM603 445h1.3v1.3h-1.3zM603 447h1.3v1.3h-1.3zM603 449h1.3v1.3h-1.3zM605 439h1.3v1.3h-1.3zM605 447h1.3v1.3h-1.3zM605 451h1.3v1.3h-1.3zM607 439h1.3v1.3h-1.3zM607 445h1.3v1.3h-1.3zM607 451h1.3v1.3h-1.3zM609 439h1.3v1.3h-1.3zM609 443h1.3v1.3h-1.3zM609 451h1.3v1.3h-1.3zM611 441h1.3v1.3h-1.3zM611 443h1.3v1.3h-1.3zM611 445h1.3v1.3h-1.3zM611 447h1.3v1.3h-1.3zM611 449h1.3v1.3h-1.3zM619 443h1.3v1.3h-1.3zM619 449h1.3v1.3h-1.3zM627 441h1.3v1.3h-1.3zM627 443h1.3v1.3h-1.3zM627 445h1.3v1.3h-1.3zM627 447h1.3v1.3h-1.3zM627 449h1.3v1.3h-1.3zM629 439h1.3v1.3h-1.3zM629 447h1.3v1.3h-1.3zM629 451h1.3v1.3h-1.3zM631 439h1.3v1.3h-1.3zM631 445h1.3v1.3h-1.3zM631 451h1.3v1.3h-1.3zM633 439h1.3v1.3h-1.3zM633 443h1.3v1.3h-1.3zM633 451h1.3v1.3h-1.3zM635 441h1.3v1.3h-1.3zM635 443h1.3v1.3h-1.3zM635 445h1.3v1.3h-1.3zM635 447h1.3v1.3h-1.3zM635 449h1.3v1.3h-1.3zM639 441h1.3v1.3h-1.3zM639 443h1.3v1.3h-1.3zM639 445h1.3v1.3h-1.3zM639 447h1.3v1.3h-1.3zM639 449h1.3v1.3h-1.3zM641 439h1.3v1.3h-1.3zM641 447h1.3v1.3h-1.3zM641 451h1.3v1.3h-1.3zM643 439h1.3v1.3h-1.3zM643 445h1.3v1.3h-1.3zM643 451h1.3v1.3h-1.3zM645 439h1.3v1.3h-1.3zM645 443h1.3v1.3h-1.3zM645 451h1.3v1.3h-1.3zM647 441h1.3v1.3h-1.3zM647 443h1.3v1.3h-1.3zM647 445h1.3v1.3h-1.3zM647 447h1.3v1.3h-1.3zM647 449h1.3v1.3h-1.3zM655 443h1.3v1.3h-1.3zM655 449h1.3v1.3h-1.3zM663 441h1.3v1.3h-1.3zM663 443h1.3v1.3h-1.3zM663 445h1.3v1.3h-1.3zM663 447h1.3v1.3h-1.3zM663 449h1.3v1.3h-1.3zM665 439h1.3v1.3h-1.3zM665 447h1.3v1.3h-1.3zM665 451h1.3v1.3h-1.3zM667 439h1.3v1.3h-1.3zM667 445h1.3v1.3h-1.3zM667 451h1.3v1.3h-1.3zM669 439h1.3v1.3h-1.3zM669 443h1.3v1.3h-1.3zM669 451h1.3v1.3h-1.3zM671 441h1.3v1.3h-1.3zM671 443h1.3v1.3h-1.3zM671 445h1.3v1.3h-1.3zM671 447h1.3v1.3h-1.3zM671 449h1.3v1.3h-1.3zM675 441h1.3v1.3h-1.3zM675 443h1.3v1.3h-1.3zM675 445h1.3v1.3h-1.3zM675 447h1.3v1.3h-1.3zM675 449h1.3v1.3h-1.3zM677 439h1.3v1.3h-1.3zM677 447h1.3v1.3h-1.3zM677 451h1.3v1.3h-1.3zM679 439h1.3v1.3h-1.3zM679 445h1.3v1.3h-1.3zM679 451h1.3v1.3h-1.3zM681 439h1.3v1.3h-1.3zM681 443h1.3v1.3h-1.3zM681 451h1.3v1.3h-1.3zM683 441h1.3v1.3h-1.3zM683 443h1.3v1.3h-1.3zM683 445h1.3v1.3h-1.3zM683 447h1.3v1.3h-1.3zM683 449h1.3v1.3h-1.3z" fill="#f4ec10"/></svg>
<div class="a" style="left:697px;top:83px;width:1px;height:381px;background:#7c7c7c"></div>
<div class="a" style="left:698px;top:83px;width:1px;height:408px;background:#a8a8a8"></div>
<div class="a" style="left:700px;top:85px;width:62px;height:405px;background:#5f6f81"></div>
<div class="a" style="left:706px;top:101px;width:55px;height:45px;border:1px solid #e8e8e8;border-radius:3px;background:linear-gradient(#ff4848,#f00808 40%,#e00000);color:#fff;font-size:13px;text-align:center;line-height:17px;box-shadow:inset 0 0 0 1px #222;padding-top:5px">Break
All</div>
<div class="a" style="left:724px;top:153px;width:20px;height:9px;background:#8a8a8a;border:1px solid #202020"></div>
<div class="a" style="left:706px;top:185px;width:55px;height:24px;border:1px solid #e8e8e8;border-radius:3px;background:linear-gradient(#8c8c8c,#5c5c5c);color:#f0f0f0;font-size:13px;text-align:center;line-height:22px;box-shadow:inset 0 0 0 1px #222;padding-top:1px"><u>S</u>leep</div>
<div class="a" style="left:706px;top:229px;width:55px;height:25px;border:1px solid #e8e8e8;border-radius:3px;background:linear-gradient(#8c8c8c,#5c5c5c);color:#f0f0f0;font-size:13px;text-align:center;line-height:23px;box-shadow:inset 0 0 0 1px #222;padding-top:1px">Re<u>c</u>all</div>
<div class="a" style="left:706px;top:351px;width:25px;height:13px;background:#8a8a8a;border:1px solid #202020"></div>
<div class="a" style="left:738px;top:351px;width:24px;height:13px;background:#8a8a8a;border:1px solid #202020;border-right:none"></div>
<div class="a" style="left:707px;top:365px;font-size:13px;color:#0c0c10;line-height:14px">Rd</div>
<div class="a" style="left:740px;top:365px;font-size:13px;color:#0c0c10;line-height:14px">Wrt</div>
<div class="a" style="left:706px;top:387px;width:55px;height:25px;border:1px solid #e8e8e8;border-radius:3px;background:linear-gradient(#b00000,#900000 50%,#700000);color:#f8f8f8;font-size:13px;text-align:center;line-height:23px;box-shadow:inset 0 0 0 1px #222;">Passp</div>
<div class="a" style="left:706px;top:433px;width:55px;height:25px;border:1px solid #e8e8e8;border-radius:3px;background:linear-gradient(#0000b8,#000090);color:#ffff40;font-size:13px;text-align:center;line-height:23px;box-shadow:inset 0 0 0 1px #222;"><u>P</u>ower</div>
<div class="a" style="left:700px;top:491px;width:62px;height:52px;background:#b4b4b4;border-top:1px solid #e0e0e0;border-left:1px solid #e0e0e0"></div>
<div class="chk" style="left:706px;top:500px;width:12px;height:12px;border-color:#c8c8c8"></div>
<div class="a" style="left:723px;top:498px;width:39px;overflow:hidden;font-size:14px;letter-spacing:-0.2px;font-weight:bold;color:#1a1a80;line-height:16px">sound</div>
<div class="a" style="left:705px;top:513px;width:14px;height:23px;background:#f0f0f0;border:1px solid #c8c8c8"></div>
<div class="a" style="left:708px;top:523px;width:8px;height:2px;background:#8aa6cc"></div>
<div class="a" style="left:720px;top:513px;width:30px;height:23px;background:#fff;border:1px solid #c8c8c8;font-size:13px;font-weight:bold;color:#1a1a80;text-align:center;line-height:21px">1</div>
<div class="a" style="left:751px;top:513px;width:11px;height:23px;background:#f0f0f0;border:1px solid #c8c8c8;border-right:none"></div>
<div class="a" style="left:754px;top:523px;width:8px;height:2px;background:#8aa6cc"></div>
<div class="a" style="left:757px;top:520px;width:2px;height:8px;background:#8aa6cc"></div>
<div class="a" style="left:22px;top:468px;width:675px;height:75px;background:#f0f0f0;border:1px solid #7a7a7a;border-right-color:#fff;border-bottom-color:#fff;box-shadow:inset 1px 1px 0 #fff"></div>
<div class="a" style="left:24px;top:470px;width:656px;height:56px;background:#eafcea"></div>
<div class="a" style="left:23px;top:487px;width:657px;height:1px;background:#dfeadf"></div>
<div class="a" style="left:33px;top:472px;font-size:13px;color:#000;line-height:15px;letter-spacing:0.5px">4:37:17</div>
<div class="a" style="left:94px;top:472px;font-size:13px;color:#f00000;line-height:15px">Block start at 885904384 = 78 ms</div>
<div class="a" style="left:23px;top:504px;width:657px;height:1px;background:#dfeadf"></div>
<div class="a" style="left:33px;top:489px;font-size:13px;color:#000;line-height:15px;letter-spacing:0.5px">4:37:17</div>
<div class="a" style="left:94px;top:489px;font-size:13px;color:#f00000;line-height:15px">Block start at 885904896 = 140 ms</div>
<div class="a" style="left:23px;top:521px;width:657px;height:1px;background:#dfeadf"></div>
<div class="a" style="left:33px;top:506px;font-size:13px;color:#000;line-height:15px;letter-spacing:0.5px">4:37:19</div>
<div class="a" style="left:94px;top:506px;font-size:13px;color:#f00000;line-height:15px">Block start at 886094336 = 171 ms</div>
<div class="a" style="left:88px;top:469px;width:1px;height:57px;background:#dfeadf"></div>
<div class="a" style="left:680px;top:469px;width:16px;height:54px;background:#f0f0f0;border-right:1px solid #e8e8e8"></div>
<div class="a" style="left:684px;top:476px;width:0;height:0;border-left:4px solid transparent;border-right:4px solid transparent;border-bottom:4px solid #333"></div>
<div class="a" style="left:681px;top:491px;width:14px;height:15px;border:1px solid #8e8e8e;border-radius:2px;background:linear-gradient(90deg,#f6f6f6,#e6e6e6 50%,#cfcfcf)"></div>
<div class="a" style="left:684px;top:515px;width:0;height:0;border-left:4px solid transparent;border-right:4px solid transparent;border-top:4px solid #333"></div>
<div class="a" style="left:23px;top:526px;width:657px;height:15px;background:#f0f0f0"></div>
<div class="a" style="left:29px;top:530px;width:0;height:0;border-top:4px solid transparent;border-bottom:4px solid transparent;border-right:4px solid #444"></div>
<div class="a" style="left:41px;top:527px;width:471px;height:14px;border:1px solid #8e8e8e;border-radius:2px;background:linear-gradient(#f8f8f8,#ececec 45%,#dadada 55%,#d0d0d0)"></div>
<div class="a" style="left:272px;top:530px;width:2px;height:7px;background:#5a5a5a;box-shadow:3px 0 0 #5a5a5a,6px 0 0 #5a5a5a"></div>
<div class="a" style="left:670px;top:530px;width:0;height:0;border-top:4px solid transparent;border-bottom:4px solid transparent;border-left:4px solid #333"></div>
</body></html>
